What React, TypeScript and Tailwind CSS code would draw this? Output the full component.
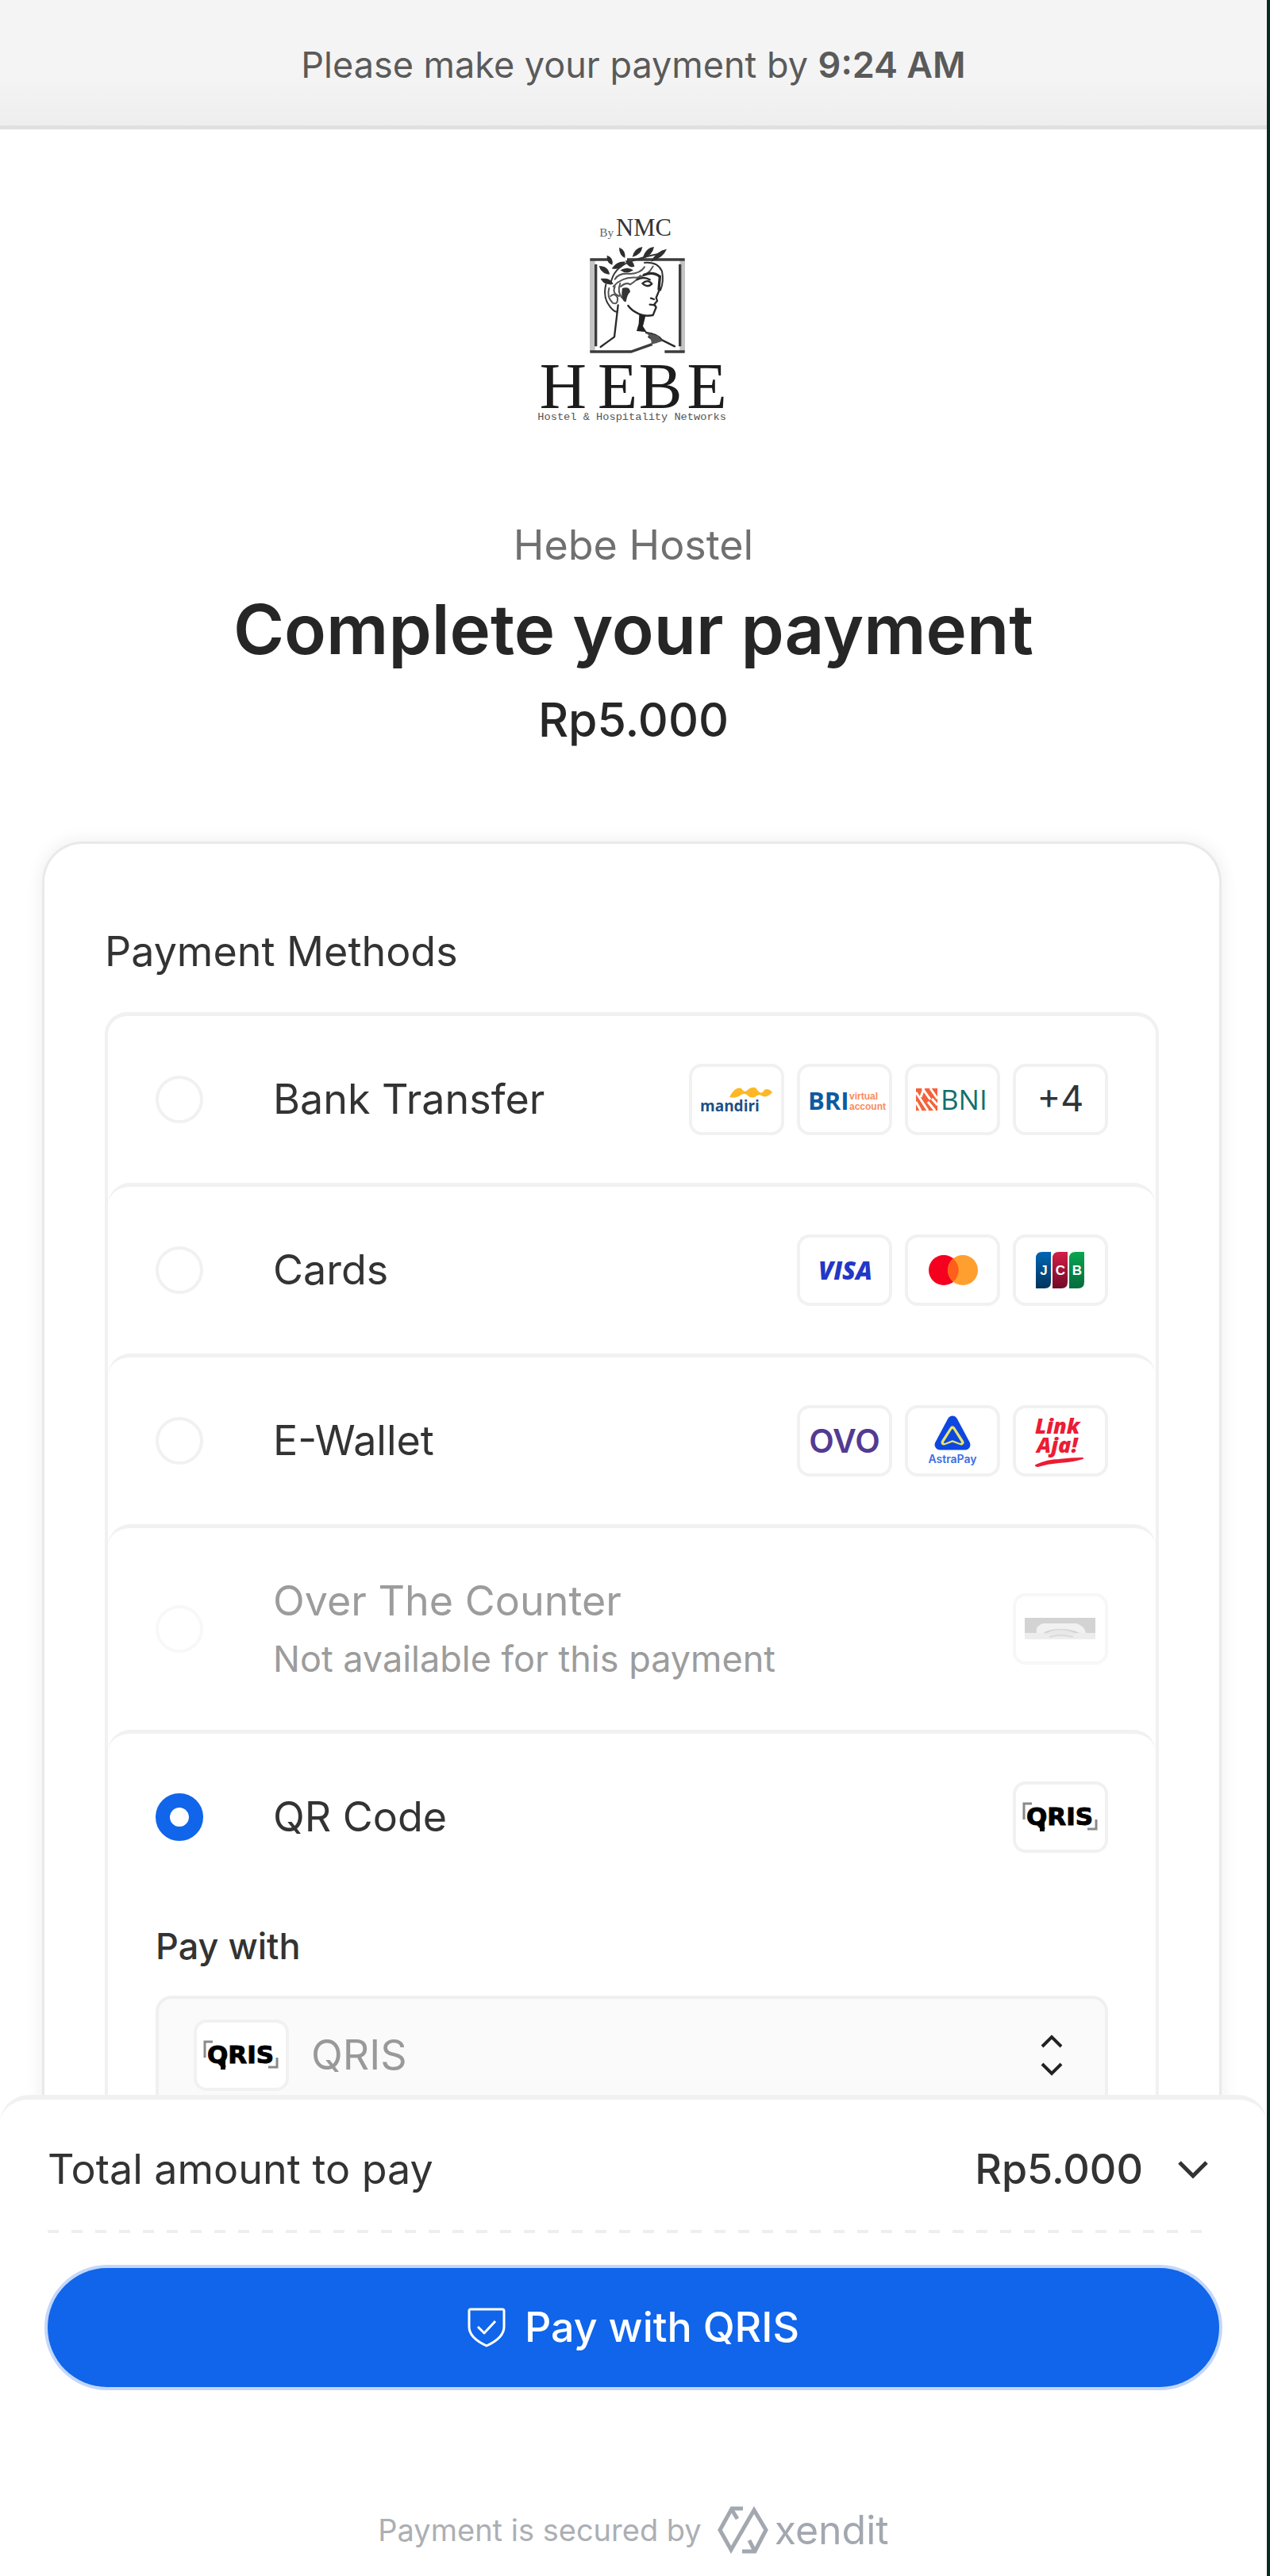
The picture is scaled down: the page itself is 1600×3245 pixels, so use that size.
import { useState, type ReactNode } from 'react';

type Method = {
  id: string;
  name: string;
  note?: string;
  brands: ReactNode[];
};

function HebeLogo() {
  return (
    <svg viewBox="114 60 720 780" className="h-[260px] w-[240px] overflow-visible" role="img" aria-label="Hebe by NMC">
      <g fontFamily="Liberation Serif, serif" fill="#333">
        <text x="346" y="142" fontSize="46" fill="#666">By</text>
        <text x="408" y="138" fontSize="92">NMC</text>
        <g fontSize="246" fill="#1c1c1c" textAnchor="middle">
          <text x="208" y="790">H</text>
          <text x="414" y="790">E</text>
          <text x="576" y="790">B</text>
          <text x="752" y="790">E</text>
        </g>
      </g>
      <text x="112" y="834" fontSize="41" fontFamily="Liberation Mono, monospace" fill="#555">Hostel &amp; Hospitality Networks</text>
      {/* frame */}
      <path d="M319 228V576M659 228V576" stroke="#c4c4c4" strokeWidth="20" fill="none" />
      <path d="M310 228H378M450 228H668M332 246V556M650 246V556M310 576H465L545 548M592 576H668" stroke="#3c3c3c" strokeWidth="10" fill="none" />
      {/* laurel */}
      <g fill="#2e2e2e">
        <path d="M420 182Q446 192 442 222Q420 212 420 182Z" />
        <path d="M470 218Q478 184 508 180Q504 210 470 218Z" />
        <path d="M508 226Q520 182 552 180Q546 214 508 226Z" />
        <path d="M540 236Q562 194 600 188Q586 222 540 236Z" />
        <path d="M374 212Q400 220 394 248Q372 242 374 212Z" />
        <path d="M344 252Q380 252 384 284Q352 282 344 252Z" />
        <path d="M350 300Q386 294 398 320Q364 328 350 300Z" />
        <path d="M392 262Q412 232 444 236Q430 270 392 262Z" />
        <path d="M444 232Q474 226 478 254Q454 264 444 232Z" />
        <path d="M424 268Q452 252 474 268Q448 286 424 268Z" />
      </g>
      <path d="M388 322Q396 260 462 236Q520 214 584 204" stroke="#333" strokeWidth="6" fill="none" />
      {/* hair */}
      <g stroke="#555" strokeWidth="6" fill="none" strokeLinecap="round">
        <path d="M404 302Q420 276 462 282Q500 280 516 256" />
        <path d="M398 330Q430 292 486 296Q530 290 548 254" />
        <path d="M370 322Q358 372 384 404Q398 424 412 426" stroke="#333" />
        <path d="M382 336Q372 370 396 392Q416 400 414 372Q404 352 388 366" />
        <path d="M404 330Q392 356 420 366M424 318Q412 348 430 372" />
        <path d="M426 330Q446 312 462 322Q490 304 500 288" />
        <path d="M516 240Q566 236 582 272Q590 312 576 344" stroke="#333" />
        <path d="M514 286Q548 272 574 292L570 340" stroke="#2a2a2a" strokeWidth="10" />
      </g>
      <path d="M432 336Q460 328 462 350Q450 360 446 388Q424 386 432 336Z" fill="#333" />
      {/* face, neck and shoulder */}
      <g stroke="#2a2a2a" strokeWidth="7" fill="none" strokeLinecap="round" strokeLinejoin="round">
        <path d="M488 304Q512 290 536 304" />
        <path d="M508 318Q528 300 544 320Q530 334 512 322" />
        <path d="M574 338L560 372L564 384L552 398L560 408L548 438Q520 444 496 434Q466 420 454 402" />
        <path d="M540 374L552 378M536 398L556 400" />
        <path d="M416 400Q408 470 402 520L350 558" />
        <path d="M522 504Q566 510 582 532L630 556" />
        <path d="M532 520L560 540M540 508L552 536" />
      </g>
      <path d="M496 436L520 440L510 480L524 502L486 498L494 470Z" fill="#222" />
      <path d="M522 504L568 516L584 536L540 550Q548 530 522 504Z" fill="#555" />
    </svg>
  );
}

function Tile({ children }: { children: ReactNode }) {
  return (
    <div className="h-[90px] w-[120px] shrink-0 rounded-2xl border-4 border-[#f1f1f1] bg-white">
      <svg viewBox="4 4 112 82" className="h-full w-full overflow-visible">
        {children}
      </svg>
    </div>
  );
}

function Mandiri() {
  return (
    <Tile>
      <text x="14" y="60" fontSize="19" fontWeight="700" fontFamily="Open Sans, sans-serif" fill="#1c4f86">mandiri</text>
      <path d="M51 42Q58 28 66 31Q70 38 75 32Q83 27 86 33Q91 40 95 33Q100 30 105 36Q99 43 93 41Q88 37 83 42Q77 44 73 39Q68 36 63 41Q57 44 51 42Z" fill="#fdb827" />
    </Tile>
  );
}

function Bri() {
  return (
    <Tile>
      <text x="14" y="58" fontSize="31" fontWeight="700" fontFamily="Open Sans, sans-serif" fill="#0f5aa0">BRI</text>
      <g fontSize="12" fontWeight="700" fontFamily="Liberation Sans, sans-serif" fill="#fb8a5c">
        <text x="66" y="45">virtual</text>
        <text x="66" y="58">account</text>
      </g>
    </Tile>
  );
}

function Bni() {
  return (
    <Tile>
      <rect x="14" y="31" width="27" height="28" fill="#f4623a" />
      <path d="M14 36L29 59M22 31L32 45M32 31L41 44M14 48L20 59M29 48L38 59M24 31L20 42M41 52L34 44" stroke="#fff" strokeWidth="3" />
      <text x="45" y="58" fontSize="35" fontWeight="500" fontFamily="Open Sans, sans-serif" fill="#12706c">BNI</text>
    </Tile>
  );
}

function More() {
  return (
    <Tile>
      <text x="60" y="60" textAnchor="middle" fontSize="45" fontFamily="Inter, sans-serif" fill="#333">+4</text>
    </Tile>
  );
}

function Visa() {
  return (
    <Tile>
      <text x="27" y="57" fontSize="31" fontWeight="800" fontStyle="italic" fontFamily="Open Sans, sans-serif" fill="#2337c6">VISA</text>
    </Tile>
  );
}

function Mastercard() {
  return (
    <Tile>
      <circle cx="49" cy="45" r="19" fill="#f5001e" />
      <circle cx="73" cy="45" r="19" fill="#ff9f30" />
      <path d="M61 30.500A19 19 0 0 1 61 59.500A19 19 0 0 1 61 30.500Z" fill="#ff5f1a" />
    </Tile>
  );
}

function Jcb() {
  return (
    <Tile>
      <defs>
        <linearGradient id="jcb-j" x2="0" y2="1"><stop stopColor="#0066b4" /><stop offset="1" stopColor="#00345c" /></linearGradient>
        <linearGradient id="jcb-c" x2="0" y2="1"><stop stopColor="#d31f45" /><stop offset="1" stopColor="#700a28" /></linearGradient>
        <linearGradient id="jcb-b" x2="0" y2="1"><stop stopColor="#0aa650" /><stop offset="1" stopColor="#046b3c" /></linearGradient>
      </defs>
      <path d="M29 30Q29 22 37 22H48V60Q48 68 40 68H29Z" fill="url(#jcb-j)" />
      <path d="M50 30Q50 22 58 22H69V60Q69 68 61 68H50Z" fill="url(#jcb-c)" />
      <path d="M71 30Q71 22 79 22H90V60Q90 68 82 68H71Z" fill="url(#jcb-b)" />
      <g fontSize="17" fontWeight="700" fontFamily="Liberation Sans, sans-serif" fill="#fff" textAnchor="middle">
        <text x="39" y="51">J</text>
        <text x="60" y="51">C</text>
        <text x="81" y="51">B</text>
      </g>
    </Tile>
  );
}

function Ovo() {
  return (
    <Tile>
      <text x="60" y="60" textAnchor="middle" fontSize="41" fontWeight="600" fontFamily="Inter, sans-serif" fill="#533a93">OVO</text>
    </Tile>
  );
}

function AstraPay() {
  return (
    <Tile>
      <path d="M60 20L76 50H44Z" fill="#0d47e0" stroke="#0d47e0" strokeWidth="13" strokeLinejoin="round" />
      <path d="M60 30L71 47L60 43L49 47Z" fill="none" stroke="#e8e36a" strokeWidth="7" strokeLinejoin="round" />
      <path d="M60 31L70 47L60 43L50 47Z" fill="#0d47e0" stroke="#0d47e0" strokeWidth="2" strokeLinejoin="round" />
      <text x="60" y="73" textAnchor="middle" fontSize="14" fontWeight="600" fontFamily="Inter, sans-serif" fill="#3b6be6">AstraPay</text>
    </Tile>
  );
}

function LinkAja() {
  return (
    <Tile>
      <g fontSize="27" fontWeight="800" fontStyle="italic" fontFamily="Open Sans, sans-serif" fill="#ec1c34">
        <text x="28" y="36">Link</text>
        <text x="30" y="60">Aja!</text>
      </g>
      <path d="M29 76Q44 69 58 69Q74 67 88 67Q76 71 58 72Q44 73 31 77Z" fill="#ec1c34" stroke="#ec1c34" strokeWidth="2" strokeLinejoin="round" />
    </Tile>
  );
}

function Alfamart() {
  return (
    <Tile>
      <rect x="15" y="31" width="89" height="27" fill="#dddddd" />
      <rect x="15" y="31" width="89" height="19" fill="#a9a9a9" />
      <path d="M30 50Q28 41 38 38H80Q90 41 92 50H84Q74 45 60 45Q46 45 38 50Z" fill="#e4e4e4" />
      <path d="M38 52Q60 40 82 52Z" fill="#d2d2d2" />
      <path d="M46 55Q60 51 76 55" stroke="#b5b5b5" strokeWidth="2" fill="none" />
    </Tile>
  );
}

function Qris() {
  return (
    <Tile>
      <path d="M14 48V28H24M105 48V60H94" stroke="#8a8a8a" strokeWidth="3" fill="none" />
      <text x="17" y="55" fontSize="31" fontWeight="700" fontFamily="DejaVu Sans, sans-serif" fill="#000" stroke="#000" strokeWidth="1">QRIS</text>
      <path d="M37 50V63" stroke="#000" strokeWidth="6" />
    </Tile>
  );
}

const methods: Method[] = [
  { id: 'bank', name: 'Bank Transfer', brands: [<Mandiri key="mandiri" />, <Bri key="bri" />, <Bni key="bni" />, <More key="more" />] },
  { id: 'cards', name: 'Cards', brands: [<Visa key="visa" />, <Mastercard key="mastercard" />, <Jcb key="jcb" />] },
  { id: 'ewallet', name: 'E-Wallet', brands: [<Ovo key="ovo" />, <AstraPay key="astrapay" />, <LinkAja key="linkaja" />] },
  { id: 'otc', name: 'Over The Counter', note: 'Not available for this payment', brands: [<Alfamart key="alfamart" />] },
  { id: 'qr', name: 'QR Code', brands: [<Qris key="qris" />] },
];

function MethodRow({ method, checked, onSelect }: { method: Method; checked: boolean; onSelect: () => void }) {
  const disabled = Boolean(method.note);

  return (
    <label
      htmlFor={method.id}
      className={`flex items-center px-15 ${disabled ? 'py-14 text-[#9c9c9c]' : 'cursor-pointer py-15'}`}
    >
      <input
        id={method.id}
        type="radio"
        name="method"
        checked={checked}
        disabled={disabled}
        onChange={onSelect}
        className="mr-[88px] size-15 shrink-0 appearance-none rounded-full border-4 border-[#f1f1f1] bg-white checked:border-[18px] checked:border-[#1065ea] disabled:border-[#f8f8f8]"
      />
      <span className="min-w-0 flex-1">
        <span className="block text-[52px] leading-18">{method.name}</span>
        {method.note && <span className="mt-1 block text-[45px] leading-[66px]">{method.note}</span>}
      </span>
      <span className={`flex gap-4 ${disabled ? 'opacity-50' : ''}`}>{method.brands}</span>
    </label>
  );
}

function PayWith() {
  return (
    <div className="px-15 pt-7 pb-15">
      <label htmlFor="channel" className="block text-[45px] leading-15 font-medium">
        Pay with
      </label>
      <div className="relative mt-8 flex h-[150px] items-center rounded-[20px] border-4 border-[#f0f0f0] bg-[#fafafa] pl-11">
        <Qris />
        <select id="channel" className="ml-7 h-full flex-1 appearance-none bg-transparent text-[52px] text-[#999] outline-none">
          <option>QRIS</option>
        </select>
        <svg viewBox="0 0 30 52" className="pointer-events-none absolute right-[52px] h-[52px] w-[30px]" fill="none" stroke="#222" strokeWidth="4">
          <path d="M3 15L15 3L27 15M3 37L15 49L27 37" />
        </svg>
      </div>
    </div>
  );
}

function XenditLogo() {
  return (
    <span className="flex items-center gap-2">
      <svg viewBox="0 0 64 60" className="h-15 w-16" fill="none" stroke="#a3a8b0" strokeWidth="5">
        <path d="M32 3H18L3 30L17 55L46 5L61 30L47 57H31" />
        <path d="M17 3L25 16M47 57L40 43" />
      </svg>
      <span className="text-[50px] leading-15 text-[#a3a8b0]">xendit</span>
    </span>
  );
}

export default function App() {
  const [selected, setSelected] = useState('qr');

  return (
    <div className="flex h-screen flex-col border-r-4 border-[#0c2a24] bg-white font-['Inter',sans-serif] text-[#333]">
      <header className="shrink-0 border-b-[5px] border-[#e0e0e0] bg-linear-to-b from-[#f4f4f4] from-60% to-[#eeeeee] pt-[54px] pb-12 text-center text-[45px] leading-14 text-[#5a5a5a]">
        Please make your payment by <strong className="font-semibold">9:24 AM</strong>
      </header>

      <main className="min-h-0 flex-1 overflow-y-auto [scrollbar-width:none]">
        <div className="flex flex-col items-center pt-27">
          <HebeLogo />
          <p className="mt-30 text-[52px] leading-18 text-[#707070]">Hebe Hostel</p>
          <h1 className="mt-5 text-[87px] leading-25 font-semibold text-[#262626]">Complete your payment</h1>
          <p className="mt-7 text-[59px] leading-18 font-medium text-[#262626]">Rp5.000</p>
        </div>

        <section className="mt-30 mr-15 ml-14 rounded-[48px] bg-white px-[76px] pt-25 pb-20 shadow-[0_0_0_3px_#e9e9e9,0_0_20px_6px_rgba(0,0,0,0.06)]">
          <h2 className="text-[52px] leading-18">Payment Methods</h2>
          <ul className="mt-10 rounded-t-[28px] border-x-4 border-t-[5px] border-[#f1f1f1]">
            {methods.map((method) => (
              <li key={method.id} className="rounded-t-[28px] border-t-[5px] border-[#f1f1f1] first:border-t-0">
                <MethodRow method={method} checked={selected === method.id} onSelect={() => setSelected(method.id)} />
                {method.id === 'qr' && selected === 'qr' && <PayWith />}
              </li>
            ))}
          </ul>
        </section>
      </main>

      <footer className="shrink-0 rounded-t-[36px] border-t-[6px] border-[#f1f1f1] px-15 pt-13 pb-7">
        <div className="flex items-center justify-between pr-3.5 text-[52px] leading-18">
          <span>Total amount to pay</span>
          <button type="button" className="flex items-center gap-11 font-medium" aria-label="Show details for Rp5.000">
            Rp5.000
            <svg viewBox="0 0 38 24" className="h-6 w-[38px]" fill="none" stroke="currentColor" strokeWidth="5">
              <path d="M2 3L19 20L36 3" />
            </svg>
          </button>
        </div>
        <div className="mt-10 mr-3.5 h-1 bg-[repeating-linear-gradient(90deg,#eeeeee_0_14px,transparent_14px_30px)]" />
        <button
          type="button"
          className="mt-11 flex h-[150px] w-full items-center justify-center gap-6 rounded-full bg-[#1065ea] text-[52px] font-medium text-white ring-4 ring-[#c3d7fa]"
        >
          <svg viewBox="0 0 48 52" className="h-[52px] w-12" fill="none" stroke="currentColor" strokeWidth="3" strokeLinejoin="round">
            <path d="M2 5Q2 3 4 3H44Q46 3 46 5V25Q46 39 24 49Q2 39 2 25Z" />
            <path d="M13 25L21 33L35 18" />
          </svg>
          Pay with QRIS
        </button>
        <div className="mt-[150px] flex items-center justify-center gap-5 text-[38px] leading-15 text-[#acafb4]">
          <span>Payment is secured by</span>
          <XenditLogo />
        </div>
      </footer>
    </div>
  );
}
